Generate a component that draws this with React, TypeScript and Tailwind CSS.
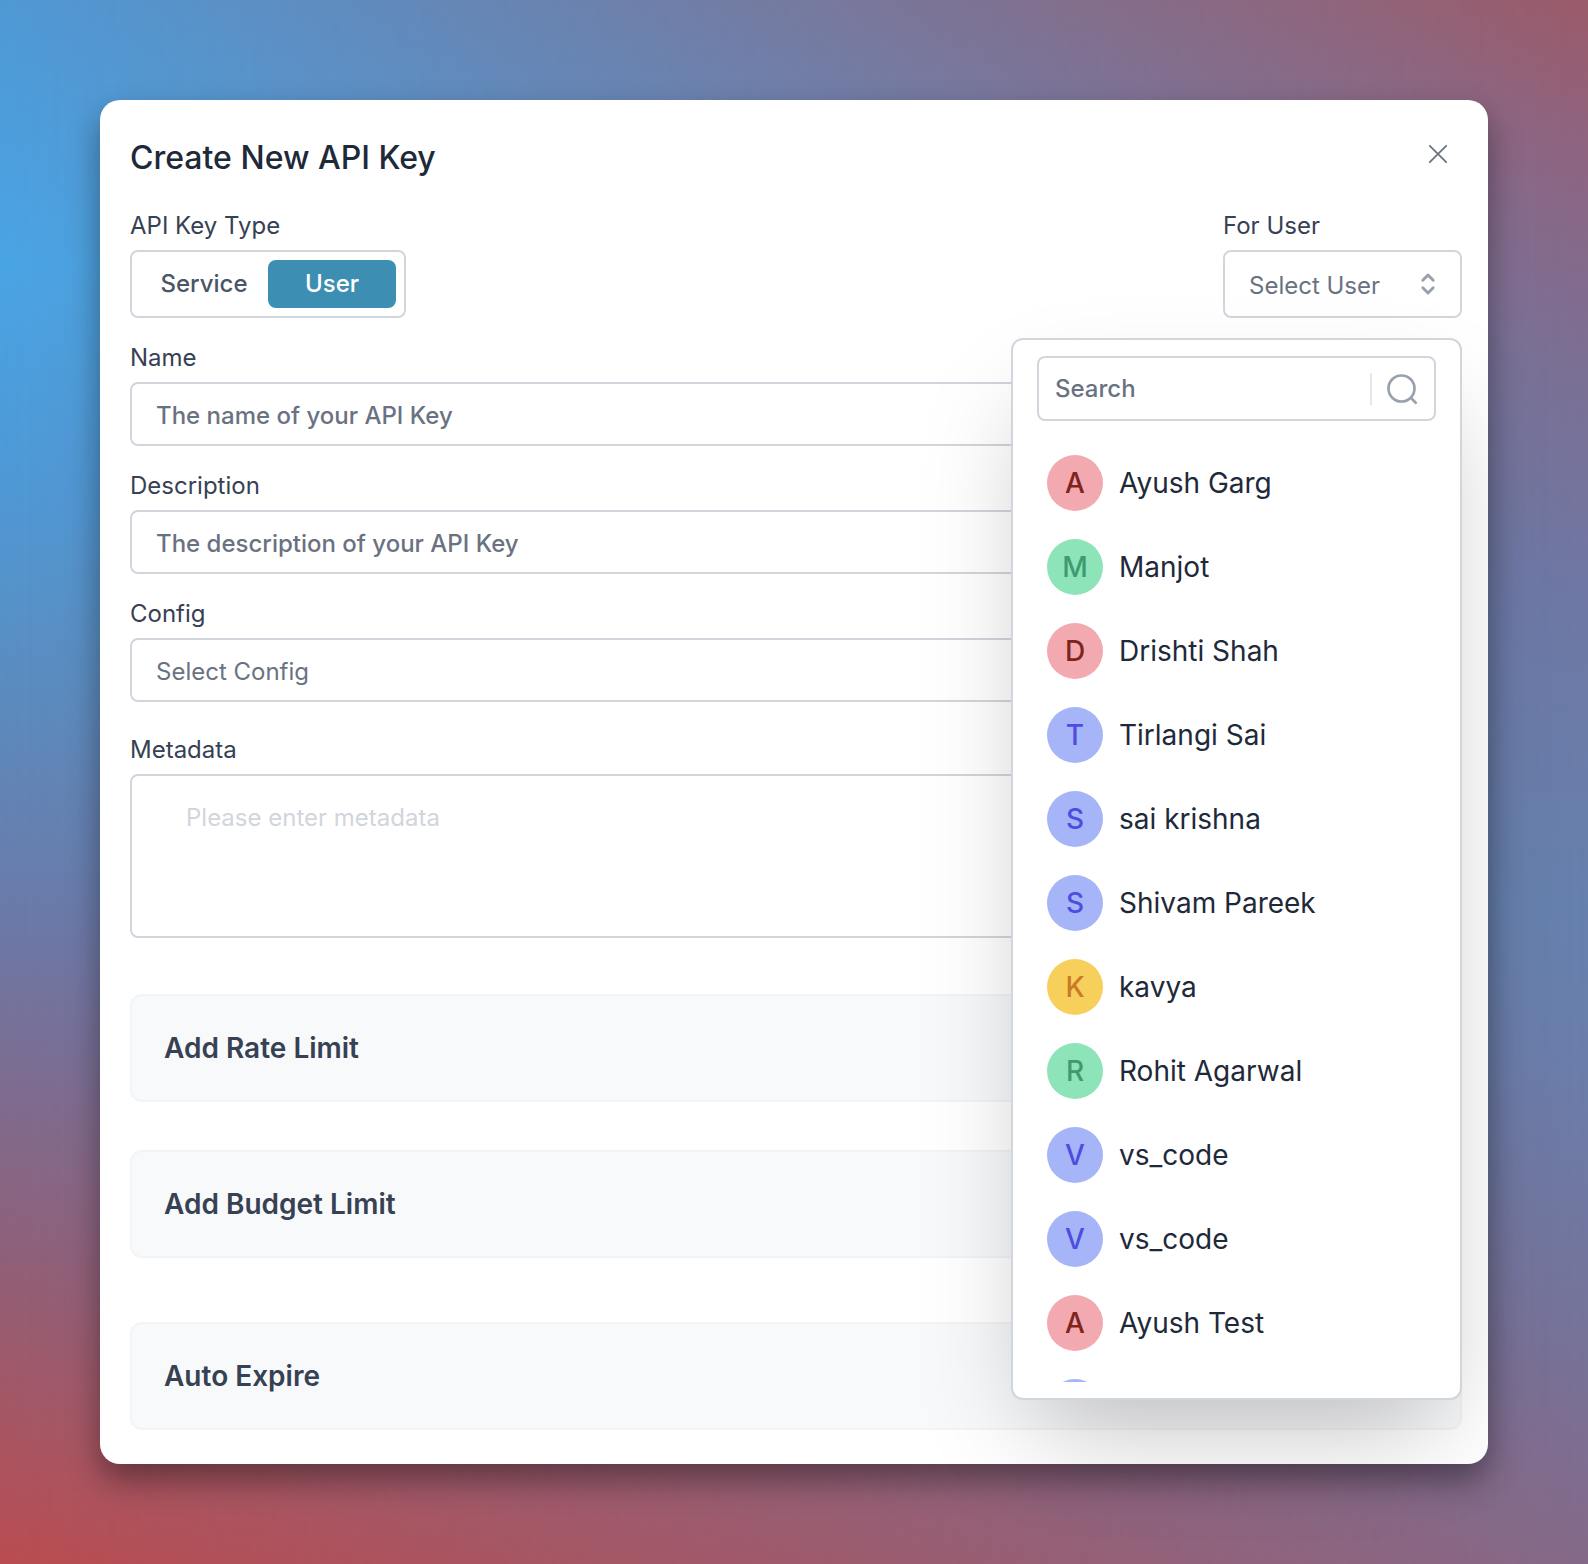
import { useState } from "react";

type Tone = { bg: string; fg: string };

const rose: Tone = { bg: "bg-[#f2a9b0]", fg: "text-[#7f231d]" };
const mint: Tone = { bg: "bg-[#8ce4b8]", fg: "text-[#3f9a6f]" };
const indigo: Tone = { bg: "bg-[#a6b4f8]", fg: "text-[#4d4de0]" };
const amber: Tone = { bg: "bg-[#f7d05b]", fg: "text-[#cb7a26]" };

const users: { name: string; tone: Tone }[] = [
  { name: "Ayush Garg", tone: rose },
  { name: "Manjot", tone: mint },
  { name: "Drishti Shah", tone: rose },
  { name: "Tirlangi Sai", tone: indigo },
  { name: "sai krishna", tone: indigo },
  { name: "Shivam Pareek", tone: indigo },
  { name: "kavya", tone: amber },
  { name: "Rohit Agarwal", tone: mint },
  { name: "vs_code", tone: indigo },
  { name: "vs_code", tone: indigo },
  { name: "Ayush Test", tone: rose },
  { name: "", tone: indigo },
];

const labelClass = "block text-2xl leading-8 text-gray-700";
const fieldClass =
  "block w-full rounded-lg border-2 border-gray-300 bg-white text-2xl leading-8 outline-none";

function CloseIcon() {
  return (
    <svg width="20" height="20" viewBox="0 0 20 20" fill="none" stroke="currentColor" strokeWidth="1.75" strokeLinecap="round" aria-hidden="true">
      <path d="M1.8 1.8l16.4 16.4M18.2 1.8l-16.4 16.4" />
    </svg>
  );
}

function UpDownIcon() {
  return (
    <svg width="16" height="24" viewBox="0 0 16 24" fill="none" stroke="currentColor" strokeWidth="3" strokeLinecap="round" strokeLinejoin="round" aria-hidden="true">
      <path d="M2.8 8.2L8 3l5.2 5.2M2.8 15.8L8 21l5.2-5.2" />
    </svg>
  );
}

function SearchIcon() {
  return (
    <svg width="32" height="32" viewBox="0 0 32 32" fill="none" stroke="currentColor" strokeWidth="2.7" strokeLinecap="round" aria-hidden="true">
      <circle cx="15.5" cy="15.5" r="13" />
      <path d="M25 25l4.7 4.7" />
    </svg>
  );
}

function LimitCard({ title }: { title: string }) {
  return (
    <button
      type="button"
      className="block w-full rounded-xl border-2 border-gray-100 bg-[#f8f9fb] px-8 py-8 text-left text-[28px] leading-10 font-semibold text-gray-700"
    >
      {title}
    </button>
  );
}

function UserMenu() {
  return (
    <div className="absolute top-full right-0 z-10 mt-5 flex h-[1062px] w-[451px] flex-col rounded-xl border-2 border-gray-300 bg-white py-4 shadow-[0_50px_100px_-24px_rgba(0,0,0,0.25)]">
      <div className="mx-6 flex h-[65px] shrink-0 items-center rounded-lg border-2 border-gray-300 px-4 text-gray-400">
        <input
          type="search"
          aria-label="Search users"
          placeholder="Search"
          className="w-full min-w-0 text-2xl leading-8 font-medium text-gray-700 outline-none placeholder:text-gray-500"
        />
        <span className="mr-3.5 h-8 w-0.5 shrink-0 bg-gray-200" />
        <button type="button" aria-label="Search" className="shrink-0">
          <SearchIcon />
        </button>
      </div>
      <ul className="mt-5 min-h-0 overflow-hidden">
        {users.map((user, i) => (
          <li key={i}>
            <button type="button" className="flex w-full items-center gap-4 px-[34px] py-3.5 text-left">
              <span
                className={`flex size-14 shrink-0 items-center justify-center rounded-full text-[28px] leading-none font-medium ${user.tone.bg} ${user.tone.fg}`}
              >
                {user.name.charAt(0).toUpperCase()}
              </span>
              <span className="text-[28px] leading-10 text-gray-800">{user.name}</span>
            </button>
          </li>
        ))}
      </ul>
    </div>
  );
}

export default function App() {
  const [kind, setKind] = useState("User");
  return (
    <div className="relative isolate min-h-screen bg-[linear-gradient(to_bottom,#9c5b6a_0%,#8b6685_12%,#7c6f93_23%,#6f78a4_38%,#6680ad_58%,#6a7eab_67%,#75749b_84%,#856988_100%)] p-[100px] font-['Inter',sans-serif]">
      <div
        aria-hidden="true"
        className="absolute inset-0 -z-10 bg-[linear-gradient(to_bottom,#4f99d5_0%,#49a4e4_17%,#4f98d4_32%,#5b8cbf_44%,#6a7aa9_58%,#806a8c_71%,#935e75_82%,#a95561_92%,#b94c50_100%)] [mask-image:linear-gradient(to_right,black,transparent)]"
      />
      <form
        aria-labelledby="dialog-title"
        className="rounded-[20px] bg-white pt-9 pr-[26px] pb-[34px] pl-[30px] shadow-[0_16px_32px_rgba(0,0,0,0.4)]"
      >
        <header className="flex items-start justify-between">
          <h1 id="dialog-title" className="text-[32px] leading-[44px] font-medium text-gray-800">
            Create New API Key
          </h1>
          <button type="button" aria-label="Close" className="mt-2 mr-3.5 text-gray-500">
            <CloseIcon />
          </button>
        </header>

        <div className="mt-[30px] flex items-start justify-between">
          <fieldset>
            <legend className={labelClass}>API Key Type</legend>
            <div className="mt-2 flex h-[68px] items-center rounded-lg border-2 border-gray-300 p-2 text-2xl leading-8 font-medium">
              {["Service", "User"].map((k) => (
                <button
                  key={k}
                  type="button"
                  aria-pressed={kind === k}
                  onClick={() => setKind(k)}
                  className={
                    kind === k
                      ? "h-12 w-32 rounded-lg bg-[#3c8fb2] text-white"
                      : "h-12 w-32 rounded-lg text-gray-600"
                  }
                >
                  {k}
                </button>
              ))}
            </div>
          </fieldset>
          <div className="relative w-[239px]">
            <label id="for-user" htmlFor="user-trigger" className={labelClass}>
              For User
            </label>
            <button
              id="user-trigger"
              type="button"
              aria-haspopup="listbox"
              aria-expanded="true"
              className="mt-2 flex h-[68px] w-full items-center justify-between rounded-lg border-2 border-gray-300 bg-white px-6 text-2xl leading-8 text-gray-500"
            >
              <span className="pt-1">Select User</span>
              <span className="text-gray-400">
                <UpDownIcon />
              </span>
            </button>
            <UserMenu />
          </div>
        </div>

        <div className="mt-6">
          <label htmlFor="name" className={labelClass}>
            Name
          </label>
          <input
            id="name"
            placeholder="The name of your API Key"
            className={`mt-2 h-16 px-6 pt-0.5 font-medium placeholder:text-gray-500 ${fieldClass}`}
          />
        </div>
        <div className="mt-6">
          <label htmlFor="description" className={labelClass}>
            Description
          </label>
          <input
            id="description"
            placeholder="The description of your API Key"
            className={`mt-2 h-16 px-6 pt-0.5 font-medium placeholder:text-gray-500 ${fieldClass}`}
          />
        </div>
        <div className="mt-6">
          <label htmlFor="config" className={labelClass}>
            Config
          </label>
          <select id="config" className={`mt-2 h-16 appearance-none px-6 pt-1 text-gray-500 ${fieldClass}`}>
            <option>Select Config</option>
          </select>
        </div>
        <div className="mt-8">
          <label htmlFor="metadata" className={labelClass}>
            Metadata
          </label>
          <textarea
            id="metadata"
            placeholder="Please enter metadata"
            className={`mt-2 h-[164px] resize-none px-[54px] py-[26px] placeholder:text-gray-300 ${fieldClass}`}
          />
        </div>

        <div className="mt-14">
          <LimitCard title="Add Rate Limit" />
        </div>
        <div className="mt-12">
          <LimitCard title="Add Budget Limit" />
        </div>
        <div className="mt-16">
          <LimitCard title="Auto Expire" />
        </div>
      </form>
    </div>
  );
}
